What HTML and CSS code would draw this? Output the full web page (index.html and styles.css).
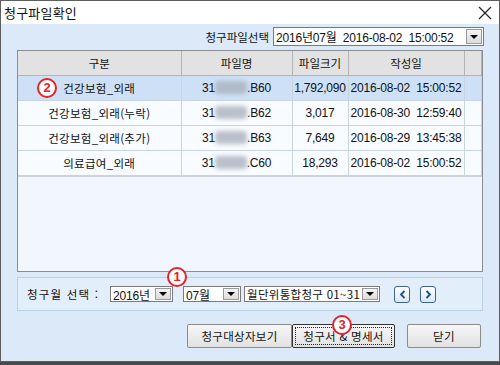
FILE: index.html
```html
<!DOCTYPE html>
<html lang="ko">
<head>
  <meta charset="UTF-8" />
  <title>청구파일확인</title>
  <link rel="stylesheet" href="styles.css">
</head>
<body>
  <div class="window">
    <div class="titlebar">
      <span class="title">청구파일확인</span>
      <svg class="close" width="14" height="14" viewBox="0 0 14 14">
        <path d="M1 1 L13 13 M13 1 L1 13" stroke="#222" stroke-width="1.2" fill="none" />
      </svg>
    </div>

    <div class="content">
      <div class="file-row">
        <span class="label">청구파일선택</span>
        <div class="combo file-combo">
          <span class="combo-text">2016년07월&nbsp; 2016-08-02&nbsp; 15:00:52</span>
          <span class="combo-btn"><i class="arrow"></i></span>
        </div>
      </div>

      <div class="grid">
        <table>
          <colgroup>
            <col style="width:163px">
            <col style="width:111px">
            <col style="width:56px">
            <col style="width:116px">
            <col>
          </colgroup>
          <thead>
            <tr><th>구분</th><th>파일명</th><th>파일크기</th><th>작성일</th><th></th></tr>
          </thead>
          <tbody>
            <tr class="selected">
              <td>건강보험_외래</td>
              <td>31<span class="blur"></span>.B60</td>
              <td>1,792,090</td>
              <td>2016-08-02&nbsp; 15:00:52</td>
              <td></td>
            </tr>
            <tr>
              <td>건강보험_외래(누락)</td>
              <td>31<span class="blur"></span>.B62</td>
              <td>3,017</td>
              <td>2016-08-30&nbsp; 12:59:40</td>
              <td></td>
            </tr>
            <tr>
              <td>건강보험_외래(추가)</td>
              <td>31<span class="blur"></span>.B63</td>
              <td>7,649</td>
              <td>2016-08-29&nbsp; 13:45:38</td>
              <td></td>
            </tr>
            <tr>
              <td>의료급여_외래</td>
              <td>31<span class="blur"></span>.C60</td>
              <td>18,293</td>
              <td>2016-08-02&nbsp; 15:00:52</td>
              <td></td>
            </tr>
          </tbody>
        </table>
      </div>

      <div class="month-box">
        <span class="month-label">청구월 선택 :</span>
        <div class="combo year-combo">
          <span class="combo-text">2016년</span>
          <span class="combo-btn"><i class="arrow"></i></span>
        </div>
        <div class="combo month-combo">
          <span class="combo-text">07월</span>
          <span class="combo-btn"><i class="arrow"></i></span>
        </div>
        <div class="combo type-combo">
          <span class="combo-text">월단위통합청구 01~31</span>
          <span class="combo-btn"><i class="arrow"></i></span>
        </div>
        <button class="nav prev">
          <svg width="7" height="9" viewBox="0 0 7 9"><path d="M5.5 1 L2 4.5 L5.5 8" stroke="#1f4f86" stroke-width="1.8" fill="none" /></svg>
        </button>
        <button class="nav next">
          <svg width="7" height="9" viewBox="0 0 7 9"><path d="M1.5 1 L5 4.5 L1.5 8" stroke="#1f4f86" stroke-width="1.8" fill="none" /></svg>
        </button>
      </div>

      <div class="buttons">
        <button class="btn btn-target">청구대상자보기</button>
        <button class="btn btn-print focused"><span class="focus-ring">청구서 &amp; 명세서</span></button>
        <button class="btn btn-close">닫기</button>
      </div>
    </div>

    <span class="mark mark-1">1</span>
    <span class="mark mark-2">2</span>
    <span class="mark mark-3">3</span>
  </div>
</body>
</html>
```

FILE: styles.css
```css
body {
  margin: 0;
  background: #4a4a4a;
  font-family: "Liberation Sans", "Noto Sans CJK KR", sans-serif;
  font-size: 12px;
  color: #111;
}
.window {
  position: relative;
  width: 500px;
  height: 362px;
  box-sizing: border-box;
  border: 1px solid #5e5e5e;
  background: #dce9f9;
  display: flex;
  flex-direction: column;
}
.titlebar {
  height: 23px;
  background: #fff;
  display: flex;
  align-items: center;
  justify-content: space-between;
  padding: 0 7px 0 3px;
}
.title {
  font-family: "Noto Sans CJK KR", sans-serif;
  font-size: 13px;
  letter-spacing: 0.2px;
}
.content {
  flex: 1;
  display: flex;
  flex-direction: column;
  padding: 3px 16px 0;
}

/* file select row */
.file-row {
  display: flex;
  justify-content: flex-end;
  align-items: center;
  gap: 4px;
  height: 19px;
}
.label {
  font-family: "Noto Sans CJK KR", sans-serif;
  font-size: 11.5px;
}

/* combo box */
.combo {
  display: flex;
  align-items: stretch;
  box-sizing: border-box;
  height: 100%;
  background: #fff;
  border: 1px solid #7a7a7a;
}
.combo-text {
  flex: 1;
  display: flex;
  align-items: center;
  padding-left: 2px;
  white-space: nowrap;
  overflow: hidden;
  letter-spacing: -0.2px;
}
.combo-btn {
  width: 14px;
  margin: 1px;
  background: linear-gradient(#f4f4f4, #dcdcdc);
  border: 1px solid #9a9a9a;
  display: flex;
  align-items: center;
  justify-content: center;
}
.arrow {
  width: 0;
  height: 0;
  border-left: 4px solid transparent;
  border-right: 4px solid transparent;
  border-top: 4px solid #000;
}
.file-combo {
  width: 211px;
  margin-right: -1px;
}

/* grid */
.grid {
  margin-top: 4px;
  height: 222px;
  box-sizing: border-box;
  border: 1px solid #8a8d92;
  background: #f2f7fe;
  overflow: hidden;
}
table {
  width: 100%;
  border-collapse: collapse;
  table-layout: fixed;
}
th {
  height: 24px;
  background: #e2e2e2;
  font-weight: normal;
  font-family: "Noto Sans CJK KR", sans-serif;
  font-size: 11.5px;
  border-right: 1px solid #b4b4b4;
  border-bottom: 1px solid #b4b4b4;
  padding: 0;
}
td {
  height: 24px;
  padding: 0;
  text-align: center;
  white-space: nowrap;
  background: #f8fbff;
  border-right: 1px solid #c8d4e0;
  border-bottom: 1px solid #c8d4e0;
  letter-spacing: -0.2px;
}
td:first-child {
  font-family: "Noto Sans CJK KR", sans-serif;
  font-size: 11.5px;
  letter-spacing: 0.3px;
}
tbody tr:last-child td {
  border-bottom: 2px solid #cfd3d8;
}
tr.selected td {
  background: #cde0f5;
}
.blur {
  display: inline-block;
  width: 32px;
  height: 13px;
  vertical-align: -2px;
  background: #aab2be;
  border-radius: 4px;
  filter: blur(2px);
  opacity: 0.8;
}

/* month group */
.month-box {
  margin-top: 5px;
  height: 34px;
  box-sizing: border-box;
  border: 1px solid #bcd0e8;
  background: #e3eefb;
  display: flex;
  align-items: center;
  padding-left: 9px;
}
.month-box .combo {
  height: 16px;
}
.month-label {
  width: 83px;
  font-family: "Noto Sans CJK KR", sans-serif;
  font-size: 11.5px;
  letter-spacing: 1.2px;
}
.year-combo {
  width: 63px;
}
.month-combo {
  width: 58px;
  margin-left: 10px;
}
.type-combo {
  width: 136px;
  margin-left: 3px;
}
.type-combo .combo-text {
  font-family: "Noto Sans CJK KR", sans-serif;
  font-size: 11.5px;
  letter-spacing: 0.3px;
}
.nav {
  width: 16px;
  height: 17px;
  padding: 0;
  border: 1px solid #3f638e;
  border-radius: 3px;
  background: linear-gradient(#ffffff, #dbe8f6);
  display: flex;
  align-items: center;
  justify-content: center;
}
.prev {
  margin-left: 14px;
}
.next {
  margin-left: 10px;
}

/* bottom buttons */
.buttons {
  margin-top: 13px;
  display: flex;
  justify-content: flex-end;
  padding-right: 2px;
}
.btn {
  height: 24px;
  padding: 0;
  border: 1px solid #8c8c8c;
  border-radius: 2px;
  background: linear-gradient(#f6f6f6, #e2e2e2);
  font-family: "Noto Sans CJK KR", sans-serif;
  font-size: 11.5px;
  letter-spacing: 0.3px;
  color: #111;
}
.btn-target {
  width: 105px;
}
.btn-print {
  width: 103px;
  border: 1px solid #333;
  padding: 2px;
}
.focus-ring {
  display: flex;
  align-items: center;
  justify-content: center;
  height: 100%;
  box-sizing: border-box;
  border: 1px dotted #222;
}
.btn-close {
  width: 74px;
  margin-left: 12px;
}

/* annotation marks */
.mark {
  position: absolute;
  width: 20px;
  height: 20px;
  box-sizing: border-box;
  border: 2px solid #e62228;
  border-radius: 50%;
  background: #fff;
  color: #e62228;
  font-family: "Liberation Sans", sans-serif;
  font-weight: bold;
  font-size: 13px;
  line-height: 16px;
  text-align: center;
}
.mark-1 {
  left: 166px;
  top: 266px;
}
.mark-2 {
  left: 36px;
  top: 77px;
}
.mark-3 {
  left: 331px;
  top: 314px;
}
```
